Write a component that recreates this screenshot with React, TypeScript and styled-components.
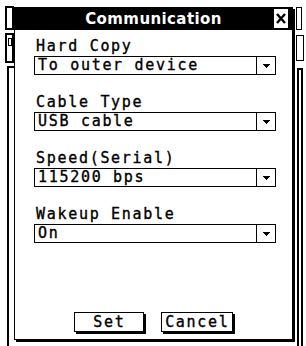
import React from "react";
import styled, { createGlobalStyle } from "styled-components";

const GlobalStyle = createGlobalStyle`
  html, body { margin: 0; padding: 0; background: #fff; }
  body { width: 306px; height: 346px; overflow: hidden; }
  * { box-sizing: border-box; }
`;

const MONO = `"DejaVu Sans Mono", "Liberation Mono", monospace`;

const Screen = styled.div`
  display: flex;
  width: 306px;
  height: 346px;
  background: #fff;
  overflow: hidden;
`;

const LeftGutter = styled.div`
  width: 14px;
  flex: none;
  display: flex;
  flex-direction: column;
  padding: 6px 0 0 5px;
`;

const RightGutter = styled.div`
  width: 13px;
  flex: none;
  display: flex;
  flex-direction: column;
  padding: 7px 0 0 3px;
`;

const Tab = styled.div<{ $w: number; $h: number; $mt: number; $bw: number }>`
  width: ${(p) => p.$w}px;
  height: ${(p) => p.$h}px;
  margin-top: ${(p) => p.$mt}px;
  border: ${(p) => p.$bw}px solid #000;
  background: #fff;
  flex: none;
  position: relative;
`;

const TabMark = styled.div`
  position: absolute;
  left: 1px;
  top: 3px;
  width: 4px;
  height: 8px;
  border: 1px solid #000;
`;

const WindowEdge = styled.div<{ $mt: number; $ml: number; $w: number; $double?: boolean }>`
  flex: 1;
  margin-top: ${(p) => p.$mt}px;
  margin-left: ${(p) => p.$ml}px;
  width: ${(p) => p.$w}px;
  border-left: 2px solid #000;
  border-top: 2px solid #000;
  ${(p) => (p.$double ? "border-right: 2px solid #000;" : "")}
`;

const Dialog = styled.div`
  width: 279px;
  height: 333px;
  margin-top: 7px;
  flex: none;
  border: 1px solid #000;
  box-shadow: 2px 2px 0 #000;
  background: #fff;
  display: flex;
  flex-direction: column;
  position: relative;
  z-index: 1;
`;

const TitleBar = styled.div`
  height: 22px;
  background: #000;
  display: grid;
  grid-template-columns: 1fr auto 1fr;
  align-items: start;
`;

const Title = styled.div`
  grid-column: 2;
  color: #fff;
  font-family: "DejaVu Sans", "Liberation Sans", sans-serif;
  font-weight: bold;
  font-size: 15px;
  line-height: 22px;
  letter-spacing: 0.4px;
  white-space: nowrap;
`;

const CloseButton = styled.div`
  grid-column: 3;
  justify-self: end;
  width: 14px;
  height: 19px;
  margin: 1px 4px 0 0;
  background: #fff;
  display: flex;
  align-items: center;
  justify-content: center;
`;

const Body = styled.div`
  flex: 1;
  display: flex;
  flex-direction: column;
  padding: 8px 0 7px 0;
`;

const Fields = styled.div`
  display: flex;
  flex-direction: column;
  gap: 19px;
  padding-left: 19px;
`;

const Field = styled.div`
  display: flex;
  flex-direction: column;
  gap: 2px;
`;

const Label = styled.div`
  font-family: ${MONO};
  font-size: 15px;
  line-height: 16px;
  letter-spacing: 1.7px;
  -webkit-text-stroke: 0.35px #000;
  padding-left: 2px;
  color: #000;
  white-space: nowrap;
`;

const Select = styled.div`
  width: 242px;
  height: 19px;
  border: 1px solid #000;
  display: flex;
`;

const SelectValue = styled.div`
  flex: 1;
  padding-left: 3px;
  font-family: ${MONO};
  font-size: 15px;
  line-height: 17px;
  letter-spacing: 1.7px;
  -webkit-text-stroke: 0.35px #000;
  color: #000;
  white-space: nowrap;
  overflow: hidden;
`;

const SelectArrow = styled.div`
  width: 19px;
  border-left: 1px solid #000;
  display: flex;
  align-items: center;
  justify-content: center;
`;

const Footer = styled.div`
  margin-top: auto;
  display: flex;
  justify-content: center;
  gap: 17px;
  padding-right: 1px;
`;

const Button = styled.div<{ $w: number }>`
  width: ${(p) => p.$w}px;
  height: 20px;
  border: 1px solid #000;
  box-shadow: 2px 2px 0 #000;
  background: #fff;
  font-family: ${MONO};
  font-size: 15px;
  line-height: 18px;
  letter-spacing: 1.7px;
  text-indent: 1.7px;
  -webkit-text-stroke: 0.35px #000;
  text-align: center;
  color: #000;
  white-space: nowrap;
`;

const Arrow = () => (
  <svg width="7" height="4" viewBox="0 0 7 4" shapeRendering="crispEdges">
    <polygon points="0,0 7,0 3.5,4" fill="#000" />
  </svg>
);

const CloseIcon = () => (
  <svg width="10" height="11" viewBox="0 0 10 11">
    <path d="M1 1 L9 10 M9 1 L1 10" stroke="#000" strokeWidth="2.4" fill="none" />
  </svg>
);

const fields = [
  { label: "Hard Copy", value: "To outer device" },
  { label: "Cable Type", value: "USB cable" },
  { label: "Speed(Serial)", value: "115200 bps" },
  { label: "Wakeup Enable", value: "On" },
];

export default function App() {
  return (
    <>
      <GlobalStyle />
      <Screen>
        <LeftGutter>
          <Tab $w={9} $h={24} $mt={0} $bw={2} />
          <Tab $w={9} $h={30} $mt={3} $bw={2}>
            <TabMark />
          </Tab>
          <WindowEdge $mt={3} $ml={2} $w={7} />
        </LeftGutter>
        <Dialog>
          <TitleBar>
            <Title>Communication</Title>
            <CloseButton>
              <CloseIcon />
            </CloseButton>
          </TitleBar>
          <Body>
            <Fields>
              {fields.map((f) => (
                <Field key={f.label}>
                  <Label>{f.label}</Label>
                  <Select>
                    <SelectValue>{f.value}</SelectValue>
                    <SelectArrow>
                      <Arrow />
                    </SelectArrow>
                  </Select>
                </Field>
              ))}
            </Fields>
            <Footer>
              <Button $w={70}>Set</Button>
              <Button $w={72}>Cancel</Button>
            </Footer>
          </Body>
        </Dialog>
        <RightGutter>
          <Tab $w={6} $h={23} $mt={0} $bw={1} />
          <Tab $w={8} $h={26} $mt={5} $bw={1} />
          <WindowEdge $mt={7} $ml={1} $w={6} $double />
        </RightGutter>
      </Screen>
    </>
  );
}
